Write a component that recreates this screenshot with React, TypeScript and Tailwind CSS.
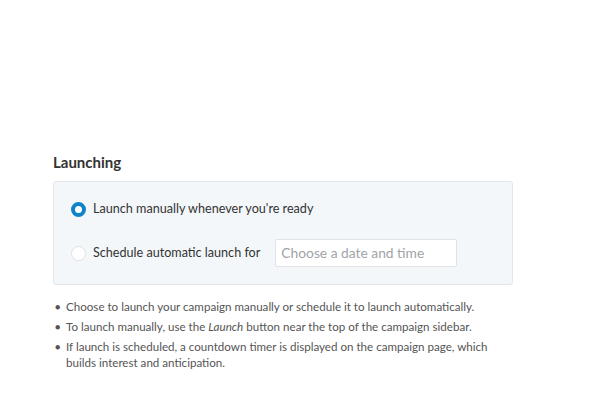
import React from "react";

export default function App() {
  const font = { fontFamily: "Lato, 'Open Sans', sans-serif" };
  return (
    <div className="w-[600px] h-[403px] bg-white text-[#333]" style={font}>
      <div className="pt-[152px] pl-[53px] w-[513px]">
        <h2 className="text-[15px] font-bold leading-[20px] text-[#333]">Launching</h2>
        <div className="mt-[9px] h-[104px] rounded-[3px] border border-[#e3e7eb] bg-[#f4f7fa] pl-[17px] pt-[18px]">
          <div className="flex items-center h-[18px]">
            <span className="w-[15px] h-[15px] rounded-full border-[4px] border-[#0f82c8] bg-white" />
            <span className="ml-[7px] text-[12.6px] text-[#333]">Launch manually whenever you're ready</span>
          </div>
          <div className="flex items-center mt-[21px] h-[28px]">
            <span className="w-[15px] h-[15px] rounded-full border border-[#dde1e5] bg-white" />
            <span className="ml-[7px] text-[12.6px] text-[#333]">Schedule automatic launch for</span>
            <div className="ml-[15px] w-[182px] h-[28px] border border-[#dfe3e7] bg-white rounded-[2px] flex items-center pl-[5px] text-[13.8px] text-[#a0a4a8]">
              Choose a date and time
            </div>
          </div>
        </div>
        <ul className="mt-[14px] ml-[2px] text-[11.6px] leading-[16px] text-[#555] w-[445px]">
          <li className="flex"><span className="w-[11px] text-[9px]">●</span><span className="flex-1">Choose to launch your campaign manually or schedule it to launch automatically.</span></li>
          <li className="flex mt-[4px]"><span className="w-[11px] text-[9px]">●</span><span className="flex-1">To launch manually, use the <i>Launch</i> button near the top of the campaign sidebar.</span></li>
          <li className="flex mt-[4px]"><span className="w-[11px] text-[9px]">●</span><span className="flex-1">If launch is scheduled, a countdown timer is displayed on the campaign page, which builds interest and anticipation.</span></li>
        </ul>
      </div>
    </div>
  );
}
